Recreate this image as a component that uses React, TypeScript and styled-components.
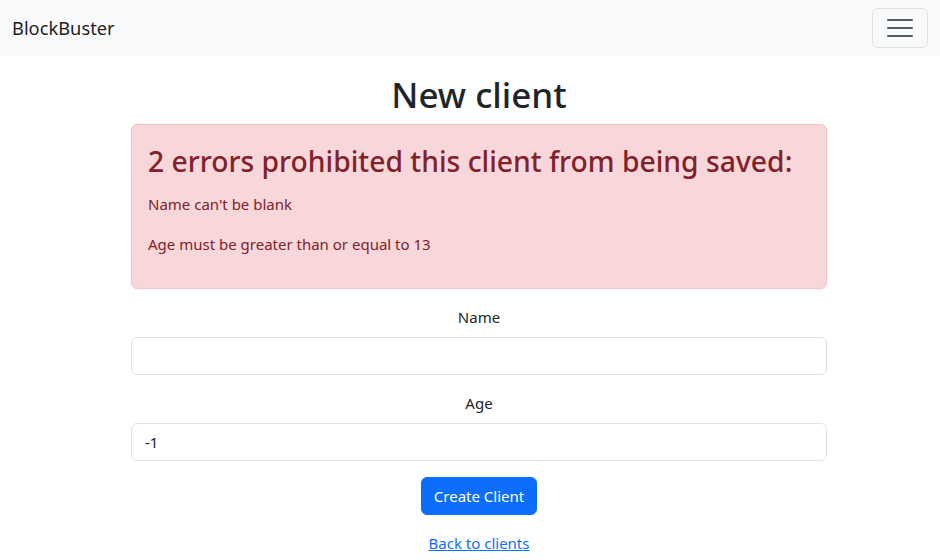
import React from 'react';
import styled, { createGlobalStyle } from 'styled-components';

const GlobalStyle = createGlobalStyle`
  * {
    box-sizing: border-box;
  }

  body {
    margin: 0;
    font-family: "Noto Sans", "Open Sans", sans-serif;
    font-size: 15px;
    line-height: 24px;
    color: #212529;
    background: #fff;
  }
`;

const Navbar = styled.nav`
  height: 56px;
  background: #f8f9fa;
  display: flex;
  align-items: center;
  justify-content: space-between;
  padding: 0 12px;
`;

const Brand = styled.a`
  font-size: 18.3px;
  color: rgba(0, 0, 0, 0.9);
  text-decoration: none;
  line-height: 30px;
`;

const Toggler = styled.button`
  width: 56px;
  height: 40px;
  border: 1px solid rgba(0, 0, 0, 0.1);
  border-radius: 6px;
  background: transparent;
  display: flex;
  align-items: center;
  justify-content: center;
  padding: 0;
  cursor: pointer;
`;

const Page = styled.main`
  padding-left: 18px;
`;

const Container = styled.div`
  width: 696px;
  margin: 0 auto;
  text-align: center;
`;

const Title = styled.h1`
  font-size: 35px;
  font-weight: 500;
  line-height: 42px;
  margin: 18px 0 8px;
`;

const Alert = styled.div`
  text-align: left;
  background: #f8d7da;
  border: 1px solid #f5c2c7;
  border-radius: 6px;
  color: #842029;
  padding: 16px;
  margin-bottom: 16px;
`;

const AlertHeading = styled.h2`
  font-size: 28.3px;
  font-weight: 500;
  line-height: 40px;
  margin: 0 0 11px;
`;

const AlertLine = styled.p`
  margin: 0 0 16px;
`;

const Field = styled.div`
  margin-bottom: 16px;
`;

const Label = styled.label`
  display: block;
  margin-bottom: 8px;
`;

const Input = styled.input`
  display: block;
  width: 100%;
  height: 38px;
  padding: 6px 13px;
  font: inherit;
  color: #212529;
  background: #fff;
  border: 1px solid #dee2e6;
  border-radius: 6px;
  outline: none;
`;

const Button = styled.button`
  height: 38px;
  padding: 0 12px;
  font: inherit;
  color: #fff;
  background: #0d6efd;
  border: 1px solid #0d6efd;
  border-radius: 6px;
  cursor: pointer;
`;

const BackLink = styled.a`
  display: inline-block;
  color: #0d6efd;
  text-decoration: underline;
`;

function MenuIcon() {
  return (
    <svg width="26" height="26" viewBox="0 0 26 26">
      <path d="M1 5h24M1 13h24M1 21h24" stroke="rgba(33,37,41,0.75)" strokeWidth="2" strokeLinecap="round" />
    </svg>
  );
}

export default function App() {
  return (
    <>
      <GlobalStyle />
      <Navbar>
        <Brand href="#">BlockBuster</Brand>
        <Toggler aria-label="Toggle navigation">
          <MenuIcon />
        </Toggler>
      </Navbar>
      <Page>
        <Container>
          <Title>New client</Title>
          <Alert>
            <AlertHeading>2 errors prohibited this client from being saved:</AlertHeading>
            <AlertLine>Name can't be blank</AlertLine>
            <AlertLine>Age must be greater than or equal to 13</AlertLine>
          </Alert>
          <form onSubmit={e => e.preventDefault()}>
            <Field>
              <Label htmlFor="client_name">Name</Label>
              <Input id="client_name" type="text" defaultValue="" />
            </Field>
            <Field>
              <Label htmlFor="client_age">Age</Label>
              <Input id="client_age" type="number" defaultValue="-1" />
            </Field>
            <Field>
              <Button type="submit">Create Client</Button>
            </Field>
          </form>
          <BackLink href="#">Back to clients</BackLink>
        </Container>
      </Page>
    </>
  );
}
